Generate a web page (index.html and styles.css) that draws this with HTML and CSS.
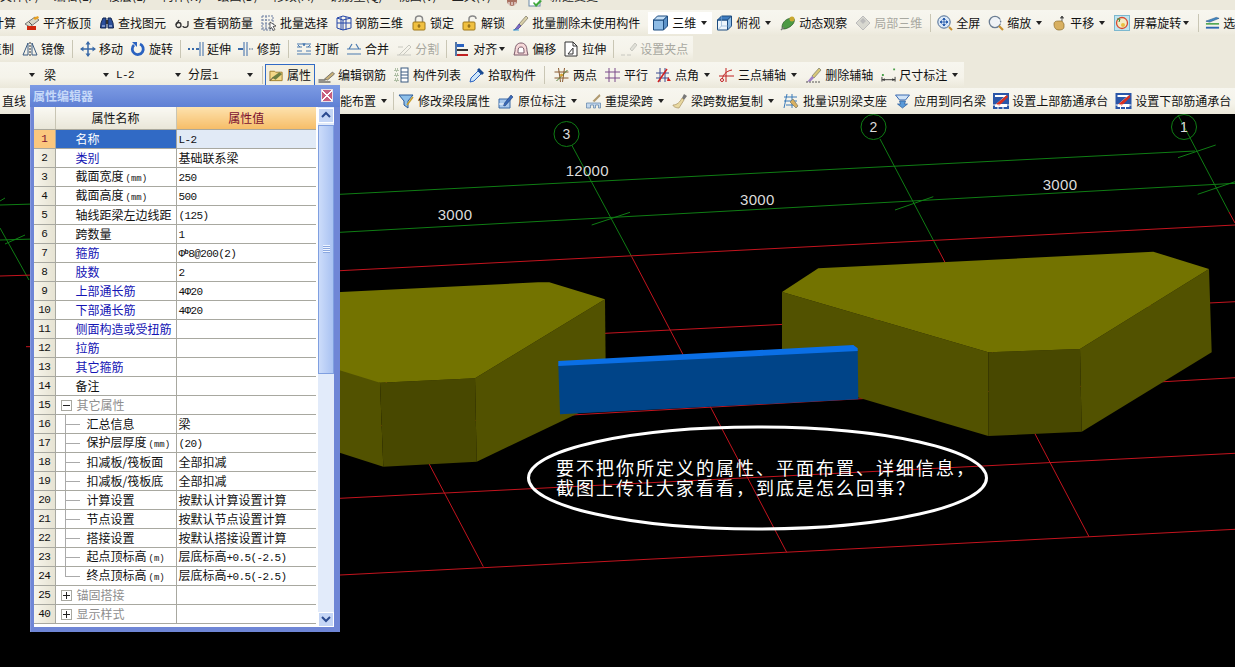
FILE: index.html
```html
<!DOCTYPE html>
<html lang="zh-CN">
<head>
<meta charset="utf-8">
<title>属性编辑器</title>
<link rel="stylesheet" href="styles.css">
</head>
<body>
<svg class="defs" aria-hidden="true">
<symbol id="flat" viewBox="0 0 16 16"><path d="M1 9 11 2l4 3-9 7z" fill="#d8d8c8" stroke="#777"/><path d="M9 3l5-2 1 2-4 2z" fill="#e8a020"/><rect x="3" y="11" width="9" height="4" fill="#d02a10"/><path d="M5 7l3 3" stroke="#555"/></symbol>
<symbol id="find" viewBox="0 0 16 16"><path d="M2 8 4 3h3v10H1.500zM14 8l-2-5H9v10h5.500z" fill="#2b4f9c" stroke="#11254f"/><rect x="7" y="5" width="2" height="4" fill="#333"/><path d="M3 11h3M10 11h3" stroke="#c7d8f5"/></symbol>
<symbol id="glass" viewBox="0 0 16 16"><circle cx="4.500" cy="10" r="2.500" fill="none" stroke="#333" stroke-width="1.300"/><path d="M2 10 5 5M14 10c0 3-5 3-5 1M14 10V6" fill="none" stroke="#333" stroke-width="1.300"/></symbol>
<symbol id="bsel" viewBox="0 0 16 16"><path d="M1 1h11v14H1zM1 5h11M1 9h11M1 13h11M5 1v14" fill="none" stroke="#6b7da0" stroke-dasharray="2 1"/><path d="M9 7l6 4-3 .5 2 3-1.500 1-2-3L9 14z" fill="#fff" stroke="#222" stroke-width=".7"/></symbol>
<symbol id="cage" viewBox="0 0 16 16"><path d="M1 3l6-2 8 2v10l-8 2-6-2zM1 8h14M5 2v13M10 2v13M1 3l6 2 8-2M7 5v10" fill="none" stroke="#2446a8"/></symbol>
<symbol id="lock" viewBox="0 0 16 16"><path d="M4.500 7V4a3.500 3 0 0 1 7 0v3" fill="none" stroke="#888" stroke-width="1.500"/><rect x="2" y="7" width="12" height="8" rx="1" fill="#f0c040" stroke="#a07818"/><path d="M8 9v4M6.500 11h3" stroke="#7a5a10"/></symbol>
<symbol id="unlock" viewBox="0 0 16 16"><path d="M7 7V4a3.500 3 0 0 1 7 0" fill="none" stroke="#888" stroke-width="1.500"/><rect x="1" y="7" width="12" height="8" rx="1" fill="#f0c040" stroke="#a07818"/><path d="M7 9v4M5.500 11h3" stroke="#7a5a10"/></symbol>
<symbol id="brush" viewBox="0 0 16 16"><path d="M6 9 13 1l2 2-7 8z" fill="#d8cfa8" stroke="#7a7460" stroke-width=".7"/><path d="M6 9l2 2-3 3-4 1 2-2z" fill="#7d6bc8" stroke="#47408a" stroke-width=".7"/><path d="M0 15h6" stroke="#3aa0d8"/></symbol>
<symbol id="cube" viewBox="0 0 16 16"><path d="M1 5h10v10H1z" fill="#8ebce6" stroke="#1d4c80"/><path d="M1 5l4-4h10l-4 4z" fill="#c4def5" stroke="#1d4c80"/><path d="M11 5l4-4v10l-4 4z" fill="#5d93c9" stroke="#1d4c80"/></symbol>
<symbol id="cubet" viewBox="0 0 16 16"><path d="M1 5h10v10H1z" fill="#eef6fc" stroke="#1d4c80"/><path d="M1 5l4-4h10l-4 4z" fill="#3e7cc0" stroke="#1d4c80"/><path d="M11 5l4-4v10l-4 4z" fill="#8ebce6" stroke="#1d4c80"/><path d="M1 15l4-4h10M5 11V1" fill="none" stroke="#7ea6cc" stroke-width=".6"/></symbol>
<symbol id="orbit" viewBox="0 0 16 16"><path d="M2 12c0-5 5-9 10-9 3 0 3 3 1 6s-7 5-9 5-2-1-2-2z" fill="#4c9a44" stroke="#2b5c28" stroke-width=".7"/><circle cx="12" cy="4" r="2.500" fill="#c9a830"/><path d="M1 15 4 12" stroke="#777" stroke-width="1.500"/></symbol>
<symbol id="local" viewBox="0 0 16 16"><path d="M8 1l7 7-7 7-7-7z" fill="#d8d8d0" stroke="#bbb"/><path d="M5 6l3-3 3 3-3 3z" fill="#bbb"/></symbol>
<symbol id="full" viewBox="0 0 16 16"><circle cx="7" cy="7" r="6.200" fill="#dbe8f7" stroke="#4c6b92"/><path d="M7 3v8M3 7h8M7 3 5.700 4.500h2.600zM7 11l-1.300-1.500h2.600zM3 7l1.500-1.300v2.600zM11 7 9.500 5.700v2.600z" stroke="#1f56a8" fill="#1f56a8" stroke-width=".8"/><path d="M12 12l3 3" stroke="#c89030" stroke-width="2"/></symbol>
<symbol id="zoomi" viewBox="0 0 16 16"><circle cx="7" cy="7" r="5.700" fill="#eef2f6" stroke="#6b7d92" stroke-width="1.300"/><path d="M11 11l4 4" stroke="#c89030" stroke-width="2.200"/><path d="M10 5h5M11 8h4" stroke="#fff"/></symbol>
<symbol id="hand" viewBox="0 0 16 16"><path d="M3 9c0-3 3-3 5-3h3l2 3v3c0 2-2 3-5 3s-5-2-5-6z" fill="#d8b060" stroke="#8a6a28" stroke-width=".7"/><path d="M11 1v5M9 3h4M11 1 9.800 2.500h2.400z" stroke="#444" fill="#444" stroke-width=".8"/></symbol>
<symbol id="spin" viewBox="0 0 16 16"><rect x=".5" y=".5" width="15" height="15" fill="#bfe4ee" stroke="#7cb8cf"/><circle cx="8" cy="8" r="5.500" fill="#f4ecc4" stroke="#d84a30" stroke-width="1.300"/><path d="M3 4l3 0-1 3" fill="none" stroke="#2f8a3a"/><circle cx="9" cy="10" r="2" fill="#e8c040"/></symbol>
<symbol id="stack" viewBox="0 0 16 16"><path d="M1 6 12 2l3 1-10 4z" fill="#3f8ac8" stroke="#1d4c80" stroke-width=".6"/><path d="M1 8h14v1.800H1z" fill="#54a854"/><path d="M1 12h14v2H1z" fill="#2d68b0"/></symbol>
<symbol id="mirror" viewBox="0 0 16 16"><path d="M6 2 1 14h5zM10 2l5 12h-5z" fill="none" stroke="#3a5a80"/><path d="M8 1v14" stroke="#333" stroke-dasharray="2 1"/></symbol>
<symbol id="move" viewBox="0 0 16 16"><path d="M8 1v14M1 8h14" stroke="#3a6aa8" stroke-width="1.500"/><path d="M8 0 5.500 3.500h5zM8 16l-2.500-3.500h5zM0 8l3.500-2.500v5zM16 8l-3.500-2.500v5z" fill="#3a6aa8"/></symbol>
<symbol id="rot" viewBox="0 0 16 16"><path d="M10 3a5.500 5.500 0 1 1-6 1" fill="none" stroke="#2a62c0" stroke-width="2.800"/><path d="M2 1h5v5z" fill="#2a62c0"/></symbol>
<symbol id="extend" viewBox="0 0 16 16"><path d="M0 8h2M4 8h2M8 8h3" stroke="#3a6aa8" stroke-width="2"/><path d="M12 1v14M15 1v14" stroke="#3a6aa8"/></symbol>
<symbol id="trim" viewBox="0 0 16 16"><path d="M6 1v14M9 1v14" stroke="#3a6aa8"/><path d="M0 8h5" stroke="#3a6aa8" stroke-width="2"/><path d="M11 8h4" stroke="#9ab" stroke-dasharray="1.500 1" stroke-width="2"/></symbol>
<symbol id="brk" viewBox="0 0 16 16"><path d="M1 3h14M1 13h14" stroke="#4a7ab0"/><path d="M1 6h5M10 6h5M1 10h5M10 10h5" stroke="#4a7ab0"/><path d="M4 6 2 4M12 6l2-2M7 2l1 3 1-3" fill="none" stroke="#4a7ab0"/></symbol>
<symbol id="merge" viewBox="0 0 16 16"><path d="M1 8h14M1 13h14M3 8l3-5M13 8l-3-5" fill="none" stroke="#4a7ab0" stroke-width="1.200"/></symbol>
<symbol id="split" viewBox="0 0 16 16"><path d="M1 14h14M3 14 13 4l2 2-8 8M2 6h5" fill="none" stroke="#c8c8c0"/></symbol>
<symbol id="align" viewBox="0 0 16 16"><path d="M2 1v14" stroke="#1d4c90" stroke-width="1.500"/><rect x="3" y="3" width="7" height="3" fill="#2a62c0"/><rect x="3" y="8" width="11" height="2" fill="#333"/><path d="M3 13h11v2H3z" fill="#c02020"/></symbol>
<symbol id="off" viewBox="0 0 16 16"><path d="M8 2c4 0 6 3 6 8l1 4H1l1-4c0-5 2-8 6-8z" fill="#f6d8d8" stroke="#7a5a6a"/><path d="M8 6c2 0 3 1 3 4v2H5v-2c0-3 1-4 3-4z" fill="#fff" stroke="#7a5a6a"/></symbol>
<symbol id="str" viewBox="0 0 16 16"><path d="M2 1h8l4 4v10H2z" fill="#fff" stroke="#333"/><path d="M5 13l5-6v6zM10 1v4h4" fill="none" stroke="#333"/></symbol>
<symbol id="grip" viewBox="0 0 16 16"><path d="M0 14h4M6 14h4M9 8l5-6 2 2-5 6z" stroke="#c8c8c0" fill="#e0e0d8"/></symbol>
<symbol id="prop" viewBox="0 0 16 16"><path d="M1 4h5l1 1h7v9H1z" fill="#f4d888" stroke="#a08030"/><path d="M3 11l8-6 3 2-7 6z" fill="#6d7f42"/><path d="M1 14l3-3" stroke="#333"/></symbol>
<symbol id="pen" viewBox="0 0 16 16"><path d="M0 13h7M0 15h12" stroke="#333"/><path d="M6 12 14 5l2 2-7 6z" fill="#c8b078" stroke="#555" stroke-width=".7"/></symbol>
<symbol id="list" viewBox="0 0 16 16"><path d="M1 2h3v2H1zM1 7h3v2H1zM1 12h3v2H1z" fill="none" stroke="#6a8a60" stroke-dasharray="1 1"/><rect x="7" y="1" width="7" height="14" fill="#fff" stroke="#3a5a80"/><path d="M7 5h7M7 8h7M7 11h7" stroke="#3a5a80"/></symbol>
<symbol id="pick" viewBox="0 0 16 16"><path d="M1 15l1-4 7-7 3 3-7 7z" fill="#cfe6f8" stroke="#2a62c0"/><path d="M8 3l2-2 5 5-2 2z" fill="#1d4c90"/></symbol>
<symbol id="two" viewBox="0 0 16 16"><path d="M1 5h14M1 11h14M5 1l2 14M11 1 9 15" fill="none" stroke="#8a5a30"/><path d="M3 14 14 3" stroke="#4c7a34"/><circle cx="8" cy="8" r="1.500" fill="#d8a030"/></symbol>
<symbol id="para" viewBox="0 0 16 16"><path d="M0 5h15M0 11h15M4 1v14M10 1v14" stroke="#7a4a8a"/></symbol>
<symbol id="ang" viewBox="0 0 16 16"><path d="M0 6h13M0 11h13M4 1v14M9 1v14" stroke="#3a4a90"/><path d="M2 15 11 2" stroke="#d02020" stroke-width="1.500"/><path d="M12 10l3 4h-4z" fill="#d02020"/></symbol>
<symbol id="tri" viewBox="0 0 16 16"><path d="M0 9h15M7 1v14" stroke="#c02020"/><path d="M3 15C3 8 7 4 13 3" fill="none" stroke="#c02020"/><circle cx="3" cy="13" r="1.500" fill="#fff" stroke="#c02020"/></symbol>
<symbol id="erase" viewBox="0 0 16 16"><path d="M6 9 13 1l2 2-7 8z" fill="#d8c878" stroke="#776" stroke-width=".7"/><path d="M6 9l2 2-3 3-4 1z" fill="#a080c8"/><path d="M0 15h14" stroke="#555" stroke-dasharray="2 1"/></symbol>
<symbol id="dim" viewBox="0 0 16 16"><path d="M1 10v5M15 10v5M1 13h14" stroke="#333"/><path d="M1 13l3-1.500v3zM15 13l-3-1.500v3z" fill="#333"/><path d="M1 7h2v2H1zM13 1h2v2h-2z" fill="#4aa04a"/></symbol>
<symbol id="funnel" viewBox="0 0 16 16"><path d="M1 2h14l-5 6v7l-4-3V8z" fill="#8ec0ea" stroke="#2a5a98"/><path d="M9 12 15 4" stroke="#c8a030" stroke-width="1.500"/></symbol>
<symbol id="place" viewBox="0 0 16 16"><path d="M1 6h11v9H1z" fill="#a8c8ec" stroke="#3a6aa8"/><path d="M5 12 13 2l2 2-8 9z" fill="#3a6ab8" stroke="#1d3c78" stroke-width=".6"/><path d="M1 11h5" stroke="#fff"/></symbol>
<symbol id="span" viewBox="0 0 16 16"><path d="M1 10h14v5h-2v-3h-3v3H8v-3H5v3H1z" fill="#c4d8ec" stroke="#5a80a8" stroke-width=".7"/><path d="M7 8 14 1l1 2-6 6z" fill="#b09a70"/></symbol>
<symbol id="sweep" viewBox="0 0 16 16"><path d="M10 5l2-4 3 2-3 4z" fill="#777"/><path d="M10 5l2 2-5 8c-2 0-6-1-6-3 4 0 7-3 9-7z" fill="#e8d8a0" stroke="#a89060" stroke-width=".7"/></symbol>
<symbol id="bident" viewBox="0 0 16 16"><path d="M1 4h13M1 8h13M3 12h10M4 1 1 15M9 1v14" fill="none" stroke="#3a7ab8"/><path d="M7 9l3-3 5 7-2 2z" fill="#d8b060" stroke="#776" stroke-width=".7"/></symbol>
<symbol id="same" viewBox="0 0 16 16"><path d="M1 2h14l-4 5H5z" fill="#cfe2f6" stroke="#3a6ab0"/><path d="M5 8h6l-1 3h3l-5 4-5-4h3z" fill="#5a9ad8" stroke="#2a5a98" stroke-width=".7"/></symbol>
<symbol id="zed" viewBox="0 0 16 16"><rect x="0" y="0" width="16" height="16" fill="#2a56a8"/><path d="M2 2h12L4 11h10v3H2v-2l9-8H2z" fill="#fff"/><path d="M3 11 14 2l1 2-9 9z" fill="#d83020"/><path d="M0 12h16M5 12v4M10 12v4" stroke="#fff"/></symbol>
<symbol id="bars" viewBox="0 0 16 16"><circle cx="6" cy="8" r="5" fill="#a87060"/><path d="M3 12v-3M6 12V9M9 12V9" stroke="#fff"/></symbol>
<symbol id="newg" viewBox="0 0 16 16"><rect x="1" y="1" width="11" height="12" fill="#fff" stroke="#6a8aa8"/><path d="M5 10l3 4 6-6-2-1-4 4-2-2z" fill="#3fa83a"/></symbol>
</svg>

<div class="page">
  <header class="bars">
    <div class="row r0">
      <span>文件(F)</span><span>编辑(E)</span><span>楼层(L)</span><span>构件(N)</span><span>绘图(D)</span><span>修改(M)</span><span>钢筋量(Q)</span><span>视图(V)</span><span>工具(T)</span>
      <span class="r0-tail"><svg class="ic"><use href="#bars"/></svg><svg class="ic"><use href="#newg"/></svg><span>新建变更</span></span>
    </div>

    <div class="row">
      <div class="strip fill">
        <span class="it cut">汇总计算</span>
        <span class="it"><svg class="ic"><use href="#flat"/></svg>平齐板顶</span>
        <span class="it"><svg class="ic"><use href="#find"/></svg>查找图元</span>
        <span class="it"><svg class="ic"><use href="#glass"/></svg>查看钢筋量</span>
        <span class="it"><svg class="ic"><use href="#bsel"/></svg>批量选择</span>
        <span class="it"><svg class="ic"><use href="#cage"/></svg>钢筋三维</span>
        <span class="it"><svg class="ic"><use href="#lock"/></svg>锁定</span>
        <span class="it"><svg class="ic"><use href="#unlock"/></svg>解锁</span>
        <span class="it"><svg class="ic"><use href="#brush"/></svg>批量删除未使用构件</span>
        <span class="it on"><svg class="ic w"><use href="#cube"/></svg>三维<i class="ar"></i></span>
        <span class="it"><svg class="ic w"><use href="#cubet"/></svg>俯视<i class="ar"></i></span>
        <span class="it"><svg class="ic"><use href="#orbit"/></svg>动态观察</span>
        <span class="it dis"><svg class="ic"><use href="#local"/></svg>局部三维</span>
        <i class="sep"></i>
        <span class="it"><svg class="ic"><use href="#full"/></svg>全屏</span>
        <span class="it"><svg class="ic"><use href="#zoomi"/></svg>缩放<i class="ar"></i></span>
        <span class="it"><svg class="ic"><use href="#hand"/></svg>平移<i class="ar"></i></span>
        <span class="it"><svg class="ic"><use href="#spin"/></svg>屏幕旋转<i class="ar t"></i></span>
        <i class="sep"></i>
        <span class="it"><svg class="ic n2"><use href="#stack"/></svg>选择</span>
      </div>
    </div>

    <div class="row">
      <div class="strip g7">
        <span class="it cut2">复制</span>
        <span class="it"><svg class="ic"><use href="#mirror"/></svg>镜像</span>
        <i class="sep"></i>
        <span class="it"><svg class="ic"><use href="#move"/></svg>移动</span>
        <span class="it"><svg class="ic"><use href="#rot"/></svg>旋转</span>
        <i class="sep"></i>
        <span class="it"><svg class="ic"><use href="#extend"/></svg>延伸</span>
        <span class="it"><svg class="ic"><use href="#trim"/></svg>修剪</span>
        <i class="sep"></i>
        <span class="it"><svg class="ic"><use href="#brk"/></svg>打断</span>
        <span class="it"><svg class="ic"><use href="#merge"/></svg>合并</span>
        <span class="it dis"><svg class="ic"><use href="#split"/></svg>分割</span>
        <i class="sep"></i>
        <span class="it"><svg class="ic"><use href="#align"/></svg>对齐<i class="ar t"></i></span>
        <span class="it"><svg class="ic"><use href="#off"/></svg>偏移</span>
        <span class="it"><svg class="ic"><use href="#str"/></svg>拉伸</span>
        <i class="sep"></i>
        <span class="it dis"><svg class="ic"><use href="#grip"/></svg>设置夹点</span>
      </div>
    </div>

    <div class="row">
      <div class="strip s3">
        <div class="combos">
          <span class="combo first"><i class="ar"></i></span>
          <span class="combo"><span>梁</span><i class="ar"></i></span>
          <span class="combo"><span class="n">L-2</span><i class="ar"></i></span>
          <span class="combo"><span>分层<b class="n">1</b></span><i class="ar"></i></span>
        </div>
        <i class="sep c"></i>
        <span class="it btn"><svg class="ic n2"><use href="#prop"/></svg>属性</span>
        <span class="it"><svg class="ic w"><use href="#pen"/></svg>编辑钢筋</span>
        <span class="it"><svg class="ic"><use href="#list"/></svg>构件列表</span>
        <span class="it"><svg class="ic"><use href="#pick"/></svg>拾取构件</span>
        <i class="sep z"></i>
        <span class="it"><svg class="ic w"><use href="#two"/></svg>两点</span>
        <span class="it"><svg class="ic"><use href="#para"/></svg>平行</span>
        <span class="it"><svg class="ic"><use href="#ang"/></svg>点角<i class="ar"></i></span>
        <span class="it"><svg class="ic"><use href="#tri"/></svg>三点辅轴<i class="ar"></i></span>
        <span class="it"><svg class="ic"><use href="#erase"/></svg>删除辅轴</span>
        <span class="it"><svg class="ic n2"><use href="#dim"/></svg>尺寸标注<i class="ar"></i></span>
      </div>
    </div>

    <div class="row">
      <div class="strip fill g7 s4">
        <span class="it">直线</span>
        <span class="gapfill"></span>
        <span class="it">智能布置<i class="ar"></i></span>
        <i class="sep r4"></i>
        <span class="it"><svg class="ic x"><use href="#funnel"/></svg>修改梁段属性</span>
        <span class="it"><svg class="ic x"><use href="#place"/></svg>原位标注<i class="ar"></i></span>
        <span class="it"><svg class="ic w"><use href="#span"/></svg>重提梁跨<i class="ar"></i></span>
        <span class="it"><svg class="ic"><use href="#sweep"/></svg>梁跨数据复制<i class="ar"></i></span>
        <span class="it"><svg class="ic x"><use href="#bident"/></svg>批量识别梁支座</span>
        <span class="it"><svg class="ic w"><use href="#same"/></svg>应用到同名梁</span>
        <span class="it"><svg class="ic"><use href="#zed"/></svg>设置上部筋通承台</span>
        <span class="it"><svg class="ic w"><use href="#zed"/></svg>设置下部筋通承台</span>
      </div>
    </div>
  </header>

  <main class="canvas">
    <svg class="scene" viewBox="0 114 1235 553" role="img" aria-label="三维视图">
      <g class="g-line">
        <path d="M0 205 34 204M340 194.300 1195 151M0 240 34 239M340 232.300 1235 183.300"/>
        <path d="M0 201 5 198M5 244 25 235M591.700 225 630 212.300M895 210 933.300 196.700M1178 157.700 1215.700 145M1197.700 194.300 1235 181.700"/>
        <path d="M0 228 29 280M571.700 145 631.700 256.700M880 139 938 249M1178 115 1229 212"/>
        <circle cx="566.500" cy="134" r="12.500"/><circle cx="873.500" cy="127" r="12.500"/><circle cx="1184" cy="127" r="12.500"/>
      </g>
      <g class="r-line">
        <path d="M0 276 34 275M340 270.700 1235 225M605 333.300 1235 301.700M340 428 1235 377.700M340 498.300 1235 453.300M340 575 1235 529.300M26 346.700H34"/>
        <path d="M631.700 256.700 786.700 552.300M938 249 1089 536.700M1229 212 1235 223M300 219 483.300 566.700"/>
      </g>

      <path class="ol-mid" d="M300 330 380 382.700 383.300 466.700 300 440z"/>
      <path class="ol-dark" d="M380 382.700 475 378.300 476.700 461.700 383.300 466.700z"/>
      <path class="ol-mid" d="M475 378.300 605 299.300 606 400 476.700 461.700z"/>
      <path class="ol-top" d="M300 294 538 282.300 549.300 282.300 605 299.300 475 378.300 380 382.700 300 358z"/>

      <path class="ol-mid" d="M782 292 988.300 352.300 988.300 436 782 375z"/>
      <path class="ol-dark" d="M988.300 352.300 1080 349 1081.700 431.700 988.300 436z"/>
      <path class="ol-mid" d="M1080 349 1209 269 1211.700 352.300 1081.700 431.700z"/>
      <path class="ol-top" d="M782 292 818.300 268.300 1153.300 251.700 1209 269 1080 349 988.300 352.300z"/>

      <path class="bl-front" d="M558.300 365 857.700 350 858.300 399.300 560 414.300z"/>
      <path class="bl-top" d="M558.300 361 853.300 345 857.700 348.300 857.700 351 558.300 366z"/>

      <ellipse class="ring" cx="757.500" cy="478" rx="229" ry="51"/>

      <text class="axis" x="566.500" y="139">3</text>
      <text class="axis" x="873.500" y="132">2</text>
      <text class="axis" x="1184" y="132">1</text>
      <text class="dim" x="587.300" y="175.500">12000</text>
      <text class="dim" x="455" y="219.500">3000</text>
      <text class="dim" x="757.300" y="204.500">3000</text>
      <text class="dim" x="1060" y="189.500">3000</text>

      <text class="note" x="556" y="475">要不把你所定义的属性、平面布置、详细信息，</text>
      <text class="note" x="556" y="495">截图上传让大家看看，到底是怎么回事？</text>
    </svg>
  </main>

  <section class="dialog">
    <div class="dlg-title"><span>属性编辑器</span><button class="close" type="button" aria-label="关闭"></button></div>
    <div class="dlg-body">
      <table class="grid">
        <colgroup><col class="c-no"><col class="c-name"><col class="c-val"></colgroup>
        <thead><tr><th></th><th>属性名称</th><th class="hv">属性值</th></tr></thead>
        <tbody>
          <tr class="sel"><td class="no">1</td><td class="nm">名称</td><td class="vl"><b class="n">L-2</b></td></tr>
          <tr><td class="no">2</td><td class="nm lk">类别</td><td class="vl">基础联系梁</td></tr>
          <tr><td class="no">3</td><td class="nm">截面宽度<b class="u">(mm)</b></td><td class="vl"><b class="n">250</b></td></tr>
          <tr><td class="no">4</td><td class="nm">截面高度<b class="u">(mm)</b></td><td class="vl"><b class="n">500</b></td></tr>
          <tr><td class="no">5</td><td class="nm">轴线距梁左边线距</td><td class="vl"><b class="n">(125)</b></td></tr>
          <tr><td class="no">6</td><td class="nm">跨数量</td><td class="vl"><b class="n">1</b></td></tr>
          <tr><td class="no">7</td><td class="nm lk">箍筋</td><td class="vl"><b class="n">Φ<b class="sp">b</b>8@200(2)</b></td></tr>
          <tr><td class="no">8</td><td class="nm lk">肢数</td><td class="vl"><b class="n">2</b></td></tr>
          <tr><td class="no">9</td><td class="nm lk">上部通长筋</td><td class="vl"><b class="n">4Φ20</b></td></tr>
          <tr><td class="no">10</td><td class="nm lk">下部通长筋</td><td class="vl"><b class="n">4Φ20</b></td></tr>
          <tr><td class="no">11</td><td class="nm lk">侧面构造或受扭筋</td><td class="vl"></td></tr>
          <tr><td class="no">12</td><td class="nm lk">拉筋</td><td class="vl"></td></tr>
          <tr><td class="no">13</td><td class="nm lk">其它箍筋</td><td class="vl"></td></tr>
          <tr><td class="no">14</td><td class="nm">备注</td><td class="vl"></td></tr>
          <tr><td class="no">15</td><td class="nm gp"><i class="box minus"></i>其它属性</td><td class="vl"></td></tr>
          <tr><td class="no">16</td><td class="nm tr">汇总信息</td><td class="vl">梁</td></tr>
          <tr><td class="no">17</td><td class="nm tr">保护层厚度<b class="u">(mm)</b></td><td class="vl"><b class="n">(20)</b></td></tr>
          <tr><td class="no">18</td><td class="nm tr">扣减板/筏板面</td><td class="vl">全部扣减</td></tr>
          <tr><td class="no">19</td><td class="nm tr">扣减板/筏板底</td><td class="vl">全部扣减</td></tr>
          <tr><td class="no">20</td><td class="nm tr">计算设置</td><td class="vl">按默认计算设置计算</td></tr>
          <tr><td class="no">21</td><td class="nm tr">节点设置</td><td class="vl">按默认节点设置计算</td></tr>
          <tr><td class="no">22</td><td class="nm tr">搭接设置</td><td class="vl">按默认搭接设置计算</td></tr>
          <tr><td class="no">23</td><td class="nm tr">起点顶标高<b class="u">(m)</b></td><td class="vl">层底标高<b class="n">+0.5(-2.5)</b></td></tr>
          <tr><td class="no">24</td><td class="nm tr last">终点顶标高<b class="u">(m)</b></td><td class="vl">层底标高<b class="n">+0.5(-2.5)</b></td></tr>
          <tr><td class="no">25</td><td class="nm gp"><i class="box plus"></i>锚固搭接</td><td class="vl"></td></tr>
          <tr><td class="no">40</td><td class="nm gp"><i class="box plus"></i>显示样式</td><td class="vl"></td></tr>
        </tbody>
      </table>
      <div class="scroll">
        <span class="sb-btn"><svg viewBox="0 0 12 10"><path d="M2 7 6 3l4 4" fill="none" stroke="#2a4a90" stroke-width="2"/></svg></span>
        <span class="sb-thumb"><i></i></span>
        <span class="sb-btn"><svg viewBox="0 0 12 10"><path d="M2 3l4 4 4-4" fill="none" stroke="#2a4a90" stroke-width="2"/></svg></span>
      </div>
    </div>
  </section>
</div>
</body>
</html>
```
FILE: styles.css
```css
* { box-sizing: border-box; }
html, body { margin: 0; height: 100%; }
body { background: #000; overflow: hidden; font: 12px/1 "Noto Sans CJK SC", "Liberation Sans", sans-serif; color: #111; }
.defs { position: absolute; width: 0; height: 0; }
.page { position: relative; display: flex; flex-direction: column; width: 1235px; height: 667px; overflow: hidden; }

/* toolbars */
.bars { flex: none; background: #ece9dc; }
.row { display: flex; height: 26px; overflow: hidden; white-space: nowrap; background: #ece9dc; }
.r0 { height: 10px; align-items: flex-end; gap: 15px; padding-bottom: 8px; color: #222; }
.r0-tail { display: flex; flex: none; align-items: flex-end; gap: 6px; }
.r0 .ic { flex: none; margin-bottom: -7px; }
.strip { display: flex; align-items: center; gap: 8px; padding-right: 5px; background: linear-gradient(#f7f6ef, #f5f3ea 60%, #ebe8da); }
.strip.fill { flex: 1; padding-right: 0; }
.g7 { gap: 7px; }
.it { display: inline-flex; flex: none; align-items: center; gap: 3px; }
.ic { flex: none; width: 16px; height: 16px; }
.ic.w { width: 17px; }
.ic.x { width: 18px; }
.ic.n2 { width: 15px; }
.dis { color: #a8a8a0; }
.cut { margin-left: -32px; }
.cut2 { margin-left: -10px; margin-right: 1px; }
.ar { flex: none; width: 0; height: 0; margin-left: 2px; margin-right: 1px; border: 3px solid transparent; border-top: 4px solid #222; border-bottom: 0; }
.ar.t { margin-left: -1px; }
.sep { flex: none; width: 1px; height: 18px; margin-right: -2px; background: #c9c6b4; }
.g7 .sep { margin-right: 0; }
.sep.z { margin-right: 0; }
.sep.c { margin-left: -2px; margin-right: -6px; }
.sep.r4 { margin-left: -2px; margin-right: -4px; }
.on { margin-right: -4px; padding: 3px 4px; background: #fff; }
.btn { margin-right: -5px; padding: 2px 3px; border: 1px solid #316ac5; background: #f4efdf; }
.combos { display: flex; height: 100%; }
.combo { display: flex; align-items: center; width: 72px; padding: 0 2px 0 4px; }
.combo .ar { margin-left: auto; }
.combo.first { width: 40px; padding-right: 4px; }
.gapfill { flex: none; width: 288px; }
.s4 { padding-left: 2px; }
.n { font: 400 11px/1 "Liberation Mono", monospace; letter-spacing: -.6px; }
.u { font: 400 9px/1 "Liberation Mono", monospace; margin-left: 2px; }

/* 3D canvas */
.canvas { flex: 1; min-height: 0; background: #000; }
.scene { display: block; width: 1235px; height: 553px; }
.g-line { fill: none; stroke: #0f7d14; stroke-width: 1; }
.r-line { fill: none; stroke: #c4141e; stroke-width: 1; }
.ol-top { fill: #737300; }
.ol-mid { fill: #525200; }
.ol-dark { fill: #484800; }
.bl-top { fill: #0a6fe6; }
.bl-front { fill: #004488; }
.ring { fill: none; stroke: #fff; stroke-width: 3; }
.axis, .dim { fill: #dcdcdc; font: 15px "Liberation Sans", sans-serif; text-anchor: middle; letter-spacing: .3px; }
.axis { font-size: 14px; }
.note { fill: #fff; font: 18px "Noto Sans CJK SC", sans-serif; letter-spacing: 2px; }

/* property dialog */
.dialog { position: absolute; left: 30px; top: 85px; display: flex; flex-direction: column; width: 310px; height: 547px; padding: 0 6px 5px 4px; background: #6f86d6; box-shadow: inset 1px 0 #8a9ce0; }
.dlg-title { flex: none; display: flex; align-items: center; justify-content: space-between; height: 21.500px; margin: 0 -6px 0 -4px; padding: 0 7px 0 3px; background: linear-gradient(#7d9be4, #5f80d4); color: #c5d8f8; font-weight: 700; }
.close { width: 12px; height: 13px; padding: 0; border: 1px solid #e8dfe8; background:
  linear-gradient(45deg, transparent 43%, #fff 43% 57%, transparent 57%),
  linear-gradient(-45deg, transparent 43%, #fff 43% 57%, transparent 57%),
  #c8607e; }
.dlg-body { flex: 1; min-height: 0; display: flex; gap: 2px; background: #fff; }
.grid { flex: none; width: 282px; height: 517px; table-layout: fixed; border-collapse: collapse; }
.c-no { width: 21px; }
.c-name { width: 121px; }
.grid th { height: 23px; padding: 0; font-weight: 400; background: linear-gradient(#faf9f3, #e9e6d8); border-right: 1px solid #c8c5b4; border-bottom: 1px solid #aaa89c; }
.grid th.hv { color: #7a1030; background: linear-gradient(#fde2ae, #f6bd68); border-right: 0; }
.grid td { height: 19px; padding: 0; border-right: 1px solid #a8a8a0; border-bottom: 1px solid #a8a8a0; overflow: hidden; white-space: nowrap; }
.grid td.vl { padding-left: 2px; border-right: 0; }
.grid td.no { background: linear-gradient(90deg, #f6f4ea, #e6e3d3); text-align: center; font: 11px/1 "Liberation Mono", monospace; letter-spacing: -.6px; }
.nm { padding-left: 20px !important; }
.lk { color: #1414b4; }
.gp { padding-left: 5px !important; color: #8e8e8e; }
.tr { padding-left: 31px !important; background:
  linear-gradient(#aaa, #aaa) 9px 0 / 1px 100% no-repeat,
  linear-gradient(#aaa, #aaa) 9px 9px / 15px 1px no-repeat; }
.tr.last { background:
  linear-gradient(#aaa, #aaa) 9px 0 / 1px 10px no-repeat,
  linear-gradient(#aaa, #aaa) 9px 9px / 15px 1px no-repeat; }
.box { display: inline-block; width: 11px; height: 11px; margin-right: 5px; vertical-align: -1px; border: 1px solid #a8a8a0; }
.minus { background: linear-gradient(#222, #222) center / 7px 1px no-repeat; }
.plus { background: linear-gradient(#222, #222) center / 7px 1px no-repeat, linear-gradient(#222, #222) center / 1px 7px no-repeat; }
.sel .no { background: #fbc77e !important; color: #7a1030; }
.sel .nm { background: #316ac5; color: #fff; }
.sel .vl { background: #e1eaf6; }
.sp { font-size: 7px; vertical-align: 3px; }
.scroll { flex: none; display: flex; flex-direction: column; gap: 2px; width: 16px; height: 520px; padding-top: 1px; background: #e2ebfa; }
.sb-btn { flex: none; display: flex; align-items: center; justify-content: center; height: 15px; border: 1px solid #fff; background: #c5d6f6; }
.sb-btn svg { width: 12px; height: 10px; }
.sb-thumb { flex: none; display: flex; align-items: center; justify-content: center; height: 249px; margin-bottom: auto; border: 1px solid #7f9fe0; background: linear-gradient(90deg, #ccdcfa, #a9c2f2); }
.sb-thumb i { width: 7px; height: 8px; background: repeating-linear-gradient(#eef4ff 0 1px, #8ba8e0 1px 2px); }
```
